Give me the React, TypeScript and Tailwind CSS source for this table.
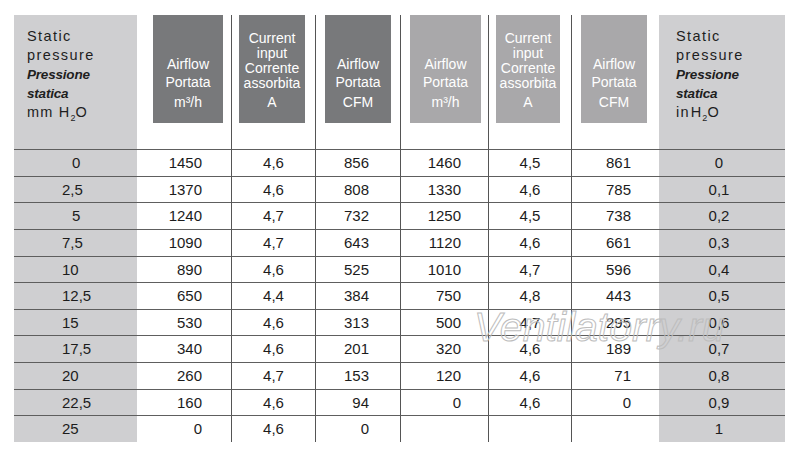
import React from "react";

const rows: string[][] = [
  ["0", "1450", "4,6", "856", "1460", "4,5", "861", "0"],
  ["2,5", "1370", "4,6", "808", "1330", "4,6", "785", "0,1"],
  ["5", "1240", "4,7", "732", "1250", "4,5", "738", "0,2"],
  ["7,5", "1090", "4,7", "643", "1120", "4,6", "661", "0,3"],
  ["10", "890", "4,6", "525", "1010", "4,7", "596", "0,4"],
  ["12,5", "650", "4,4", "384", "750", "4,8", "443", "0,5"],
  ["15", "530", "4,6", "313", "500", "4,7", "295", "0,6"],
  ["17,5", "340", "4,6", "201", "320", "4,6", "189", "0,7"],
  ["20", "260", "4,7", "153", "120", "4,6", "71", "0,8"],
  ["22,5", "160", "4,6", "94", "0", "4,6", "0", "0,9"],
  ["25", "0", "4,6", "0", "", "", "", "1"],
];

const grid =
  "grid grid-cols-[123px_94px_84px_85px_88px_83px_88px_126px]";

function Sub2() {
  return <span className="relative top-[4px] text-[9px] tracking-normal">2</span>;
}

function SideHeader({ unit, pl }: { unit: React.ReactNode; pl: string }) {
  return (
    <div className={`h-full bg-[#cfcfd1] ${pl} pt-[12px] text-[14.5px] leading-[19px] text-[#1e1e1e]`}>
      <div className="tracking-[1.4px]">Static</div>
      <div className="tracking-[1.4px]">pressure</div>
      <div className="font-bold italic text-[13.5px] tracking-[-0.2px]">Pressione</div>
      <div className="font-bold italic text-[13.5px] tracking-[-0.2px]">statica</div>
      <div className="tracking-[1.2px]">{unit}</div>
    </div>
  );
}

function Box({
  lines,
  unit,
  dark,
  ml,
  w,
  tight,
  border,
}: {
  lines: string[];
  unit: React.ReactNode;
  dark: boolean;
  ml: string;
  w: string;
  tight?: boolean;
  border?: boolean;
}) {
  return (
    <div className={`h-full ${border ? "border-l border-[#555]" : ""}`}>
      <div
        className={`${ml} ${w} h-[108px] ${dark ? "bg-[#78797b]" : "bg-[#a9a8aa]"} flex flex-col justify-end items-center pb-[12px] text-[14px] text-white`}
      >
        {lines.map((l) => (
          <div key={l} className={tight ? "leading-[15px]" : "leading-[17.5px]"}>
            {l}
          </div>
        ))}
        <div className="leading-[18px] mt-[2px]">{unit}</div>
      </div>
    </div>
  );
}

export default function App() {
  return (
    <div
      className="relative w-[800px] h-[461px] bg-white pl-[14px] pt-[15px] overflow-hidden font-['Liberation_Sans',Arial,sans-serif]"
    >
      <div className={`${grid} h-[134px]`}>
        <SideHeader
          pl="pl-[13px]"
          unit={
            <>
              mm H<Sub2 />O
            </>
          }
        />
        <Box lines={["Airflow", "Portata"]} unit={<>m³/h</>} dark ml="ml-[16px]" w="w-[70px]" />
        <Box
          lines={["Current", "input", "Corrente", "assorbita"]}
          unit="A"
          dark
          tight
          border
          ml="ml-[7px]"
          w="w-[66px]"
        />
        <Box lines={["Airflow", "Portata"]} unit="CFM" dark border ml="ml-[9px]" w="w-[66px]" />
        <Box lines={["Airflow", "Portata"]} unit={<>m³/h</>} dark={false} border ml="ml-[9px]" w="w-[71px]" />
        <Box
          lines={["Current", "input", "Corrente", "assorbita"]}
          unit="A"
          dark={false}
          tight
          border
          ml="ml-[7px]"
          w="w-[64px]"
        />
        <Box lines={["Airflow", "Portata"]} unit="CFM" dark={false} border ml="ml-[9px]" w="w-[66px]" />
        <SideHeader
          pl="pl-[17px]"
          unit={
            <>
              in<span className="ml-[1px]">H</span>
              <Sub2 />O
            </>
          }
        />
      </div>
      {rows.map((r, i) => {
        const single = r[0].length === 1;
        return (
          <div
            key={i}
            className={`${grid} h-[26.64px] text-[15px] text-[#1c1c1c] leading-[25px]`}
          >
            <div
              className={`border-t border-[#5e5e5e] bg-[#cfcfd1] ${single ? "pl-[58px]" : "pl-[48px]"}`}
            >
              {r[0]}
            </div>
            <div className="border-t border-[#5e5e5e] text-right pr-[29px]">{r[1]}</div>
            <div className="border-t border-l border-[#555] border-t-[#5e5e5e] text-center">{r[2]}</div>
            <div className="border-t border-l border-[#555] border-t-[#5e5e5e] text-right pr-[31px]">{r[3]}</div>
            <div className="border-t border-l border-[#555] border-t-[#5e5e5e] text-right pr-[27px]">{r[4]}</div>
            <div className="border-t border-l border-[#555] border-t-[#5e5e5e] text-center">{r[5]}</div>
            <div className="border-t border-l border-[#555] border-t-[#5e5e5e] text-right pr-[28px]">{r[6]}</div>
            <div className="border-t border-[#5e5e5e] bg-[#cfcfd1] text-center pr-[6px]">{r[7]}</div>
          </div>
        );
      })}
      <div className="absolute left-[474px] top-[306px] text-[41px] leading-[42px] italic text-transparent [-webkit-text-stroke:1px_#bdbdbd] pointer-events-none">
        Ventilatorry.ru
      </div>
    </div>
  );
}
